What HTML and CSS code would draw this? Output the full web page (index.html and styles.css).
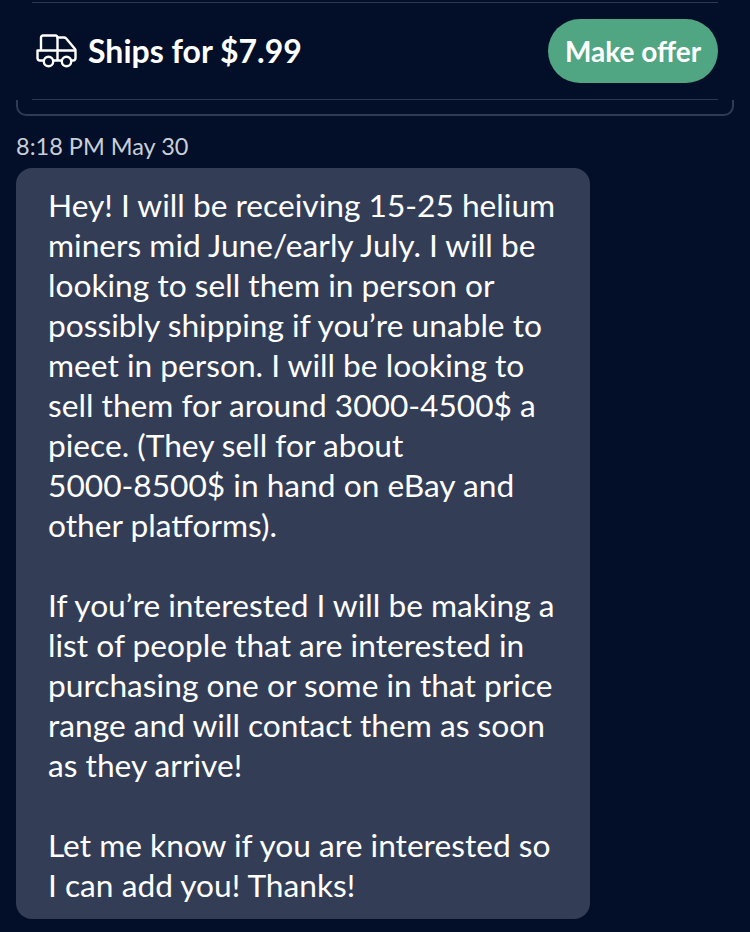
FILE: index.html
```html
<!DOCTYPE html>
<html lang="en">
<head>
<meta charset="utf-8">
<title>Message</title>
<link rel="stylesheet" href="styles.css">
</head>
<body>
<header class="bar">
  <div class="ship">
    <svg class="truck" width="41" height="34" viewBox="1.500 1.500 41 34" fill="none" stroke="#fff" stroke-width="2.400" stroke-linecap="round" stroke-linejoin="round">
      <path d="M9 28H5.500a2.500 2.500 0 0 1-2.500-2.500V18H23V5a2 2 0 0 0-2-2H8.500a2 2 0 0 0-2 2v13"/>
      <path d="M23 5h6.500a3 3 0 0 1 2.200 1l8.800 10.500a3 3 0 0 1 .5 1.600v7.400a2.500 2.500 0 0 1-2.500 2.500H37"/>
      <path d="M19 28h8M23 18v10M23 18h17"/>
      <circle cx="14" cy="29" r="4.700"/>
      <circle cx="32" cy="29" r="4.700"/>
    </svg>
    <span class="ship-text">Ships for $7.99</span>
  </div>
  <button class="offer">Make offer</button>
</header>
<div class="card-end"></div>
<div class="time">8:18 PM May 30</div>
<div class="bubble">
  <p>Hey! I will be receiving 15-25 helium<br>miners mid June/early July. I will be<br>looking to sell them in person or<br>possibly shipping if you’re unable to<br>meet in person. I will be looking to<br>sell them for around 3000-4500$ a<br>piece. (They sell for about<br>5000-8500$ in hand on eBay and<br>other platforms).</p>
  <p>If you’re interested I will be making a<br>list of people that are interested in<br>purchasing one or some in that price<br>range and will contact them as soon<br>as they arrive!</p>
  <p>Let me know if you are interested so<br>I can add you! Thanks!</p>
</div>
</body>
</html>
```
FILE: styles.css
```css
* { box-sizing: border-box; }
html, body { margin: 0; padding: 0; }
body {
  width: 750px;
  height: 932px;
  overflow: hidden;
  background: #030f28;
  color: #fff;
  font-family: Lato, sans-serif;
}
.bar {
  height: 98px;
  margin: 2px 32px 0;
  padding: 16px 0 0 4px;
  display: flex;
  justify-content: space-between;
  align-items: flex-start;
  border-top: 1px solid #2c3850;
  border-bottom: 1px solid #2c3850;
}
.ship { display: flex; align-items: center; gap: 11px; height: 64px; }
.truck { margin-top: -1px; }
.ship-text { font-size: 32px; font-weight: 700; line-height: 62px; margin-top: -1px; }
.offer {
  width: 170px;
  height: 64px;
  border: 0;
  border-radius: 32px;
  background: #50a583;
  color: #fff;
  font: 700 28px Lato, sans-serif;
}
.card-end {
  height: 16px;
  margin: 0 16px;
  border: 2px solid #2f3b54;
  border-top: 0;
  border-radius: 0 0 10px 10px;
}
.time {
  margin: 15px 0 0 16px;
  font-size: 23.500px;
  line-height: 30px;
  color: #c9ced9;
}
.bubble {
  width: 574px;
  margin: 7px 0 0 16px;
  padding: 17px 32px 14px;
  background: #333e56;
  border-radius: 16px;
  font-size: 31.700px;
  line-height: 40px;
}
.bubble p { margin: 0 0 40px; }
.bubble p:last-child { margin-bottom: 0; }
```
